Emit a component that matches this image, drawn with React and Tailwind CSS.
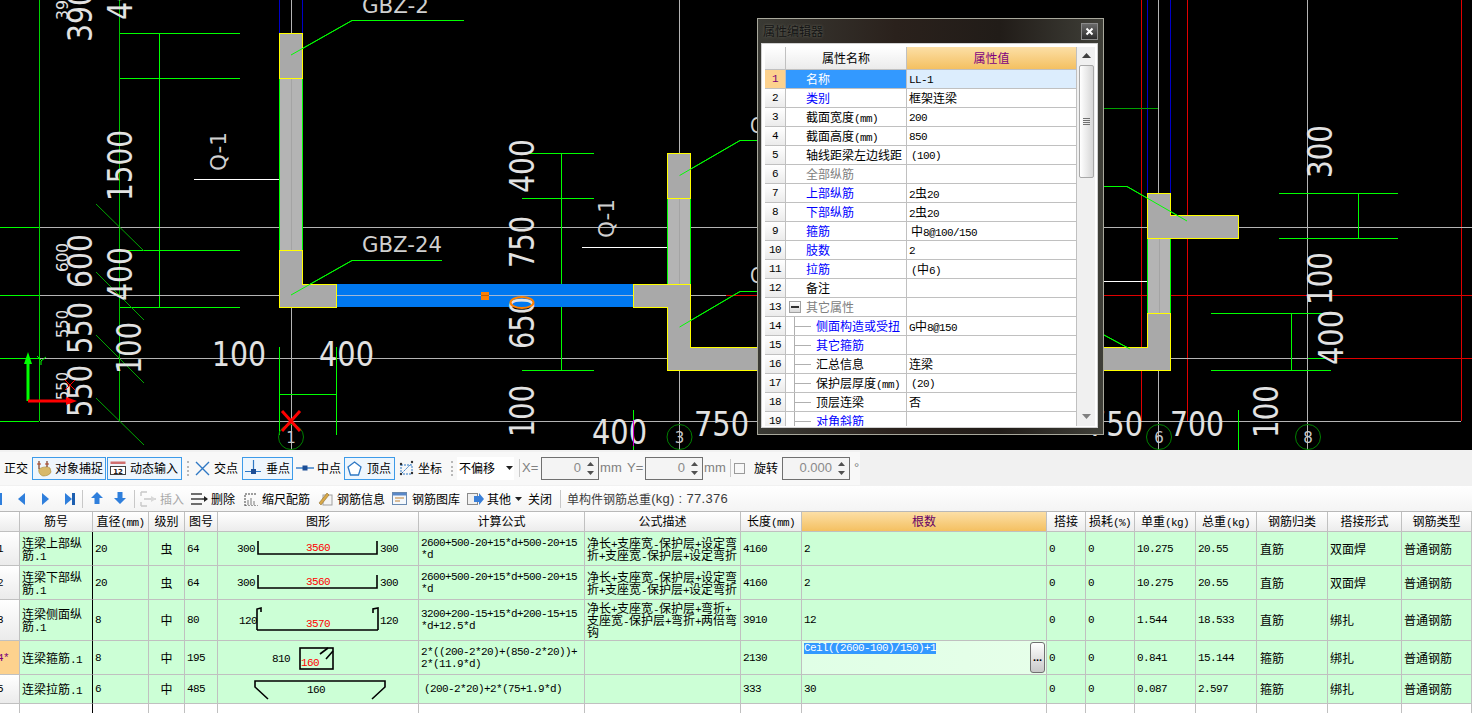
import React from "react";

const CJK = "font-['Noto_Sans_CJK_SC',sans-serif]";

function Mix({ t, cjk = "text-[12px]" }) {
  const parts = t.split(/([\u2E80-\u9FFF\uFF00-\uFFEF]+)/).filter(Boolean);
  return (
    <>
      {parts.map((p, i) =>
        /[\u2E80-\u9FFF\uFF00-\uFFEF]/.test(p) ? (
          <span key={i} className={`font-['Noto_Sans_CJK_SC',sans-serif] ${cjk}`}>{p}</span>
        ) : (
          <span key={i} className="font-['Liberation_Mono',monospace] text-[11px] tracking-[-0.6px]">{p}</span>
        )
      )}
    </>
  );
}

function Lines({ lines, cjk }) {
  return (
    <div className="flex flex-col">
      {lines.map((l, i) => (
        <div key={i} className="h-[12px] leading-[12px] whitespace-pre">
          <Mix t={l} cjk={cjk} />
        </div>
      ))}
    </div>
  );
}

const G = "#00ff00", GD = "#00a800", GR = "#b4b4b4", R = "#e00000", B = "#0000c8", Y = "#ffff00", W = "#ffffff";

const L = ({ a, c, w = 1 }) => (
  <line x1={a[0]} y1={a[1]} x2={a[2]} y2={a[3]} stroke={c} strokeWidth={w} />
);
const V = ({ x, y, t, len, s = 34, c = "#e2e2e2" }) => (
  <text transform={`translate(${x} ${y}) rotate(-90)`} textLength={len} lengthAdjust="spacingAndGlyphs" fontFamily="DejaVu Sans" fontSize={s} fill={c}>{t}</text>
);
const H = ({ x, y, t, len, s = 34, c = "#e2e2e2" }) => (
  <text x={x} y={y} textLength={len} lengthAdjust="spacingAndGlyphs" fontFamily="DejaVu Sans" fontSize={s} fill={c}>{t}</text>
);

const crisp = [
  [1141.5, 0, 1141.5, 421, R], [1187.5, 0, 1187.5, 421, R], [1461.5, 0, 1461.5, 421, R],
  [1147.5, 0, 1147.5, 193, B], [1170.5, 0, 1170.5, 193, B],
  [279.5, 0, 279.5, 33, B], [302.5, 0, 302.5, 33, B],
  [39.5, 0, 39.5, 421, "#00d000"], [119.5, 0, 119.5, 421, "#00c000"], [159.5, 33, 159.5, 307, G],
  [0, 227.5, 39, 227.5, G], [40, 227.5, 1472, 227.5, GR],
  [0, 295.5, 39, 295.5, G], [40, 295.5, 726, 295.5, GR], [726, 295.5, 1472, 295.5, R],
  [0, 358.5, 39, 358.5, G], [40, 358.5, 1308, 358.5, GR], [1308, 358.5, 1325, 358.5, G], [1325, 358.5, 1472, 358.5, R],
  [0, 421.5, 39, 421.5, G], [40, 421.5, 1461, 421.5, GR],
  [291.5, 0, 291.5, 450, GR], [679.5, 0, 679.5, 450, GR], [1158.5, 0, 1158.5, 450, GR], [1307.5, 0, 1307.5, 450, GR],
  [120, 33.5, 240, 33.5, G], [120, 78.5, 240, 78.5, G], [120, 250.5, 240, 250.5, G], [120, 307.5, 240, 307.5, G],
  [522, 153.5, 594, 153.5, G], [522, 198.5, 594, 198.5, G], [522, 284.5, 594, 284.5, G], [522, 370.5, 594, 370.5, G], [561.5, 153, 561.5, 370, G],
  [1279, 193.5, 1398, 193.5, G], [1279, 238.5, 1398, 238.5, G], [1358.5, 193, 1358.5, 238, G],
  [1211, 313.5, 1331, 313.5, G], [1211, 370.5, 1331, 370.5, G], [1291.5, 313, 1291.5, 370, G],
  [279.5, 347, 279.5, 435, G], [336.5, 347, 336.5, 435, G], [279, 394.5, 337, 394.5, G],
  [633.5, 410, 633.5, 450, G], [1238.5, 410, 1238.5, 450, G],
  [194, 179.5, 291, 179.5, W], [582, 247.5, 679, 247.5, W], [1104, 281.5, 1158, 281.5, W],
  [1104, 108.5, 1158, 108.5, "#00a000"],
  [352, 20.5, 464, 20.5, G], [352, 260.5, 442, 260.5, G], [740, 140.5, 757, 140.5, G], [740, 291.5, 757, 291.5, G], [1104, 186.5, 1127, 186.5, G],
];

const diag = [
  [96, 204, 144, 251, GD], [96, 272, 144, 320, GD], [96, 335, 144, 383, GD], [96, 398, 144, 445, GD],
  [291, 55, 352, 20.5, G], [291, 295, 352, 260.5, G], [679.6, 175.5, 740, 140.5, G], [679.6, 327, 740, 291.5, G],
  [1127, 186.5, 1187, 221, G], [1104, 335, 1130, 349, G],
];

function Wall({ x, y1, y2 }) {
  return (
    <g shapeRendering="crispEdges">
      <rect x={x} y={y1} width={23} height={y2 - y1} fill="#b4b4b4" />
      <L a={[x, y1, x, y2]} c={G} />
      <L a={[x + 23, y1, x + 23, y2]} c={G} />
      <L a={[x + 12, y1, x + 12, y2]} c="#a4a4a4" />
    </g>
  );
}
const Col = ({ p }) => (
  <polygon points={p} fill="#a9a9a9" stroke={Y} strokeWidth="1" shapeRendering="crispEdges" />
);

function Canvas() {
  return (
    <svg width="1472" height="450" className="block">
      <g shapeRendering="crispEdges">
        {crisp.map((l, i) => <L key={i} a={l.slice(0, 4)} c={l[4]} />)}
      </g>
      {diag.map((l, i) => <L key={i} a={l.slice(0, 4)} c={l[4]} />)}

      <Wall x={279.5} y1={78} y2={250} />
      <Wall x={667.5} y1={198} y2={284} />
      <Wall x={1147.5} y1={238} y2={313} />
      <Col p="279.5,33.5 302.5,33.5 302.5,78.5 279.5,78.5" />
      <Col p="279.5,250.5 302.5,250.5 302.5,284.5 336.5,284.5 336.5,307.5 279.5,307.5" />
      <Col p="667.5,153.5 690.5,153.5 690.5,198.5 667.5,198.5" />
      <rect x="337" y="284" width="297" height="23" fill="#0078f0" />
      <L a={[337, 295.5, 633, 295.5]} c="#9fb8d8" />
      <Col p="633.5,284.5 690.5,284.5 690.5,347.5 760,347.5 760,370.5 667.5,370.5 667.5,307.5 633.5,307.5" />
      <Col p="1147.5,193.5 1170.5,193.5 1170.5,215.5 1238.5,215.5 1238.5,238.5 1147.5,238.5" />
      <Col p="1170.5,313.5 1170.5,370.5 1100,370.5 1100,347.5 1147.5,347.5 1147.5,313.5" />
      <rect x="481" y="292" width="8" height="8" fill="#ff8000" />
      <L a={[481, 295.5, 489, 295.5]} c="#c06000" />

      {diag.slice(4).map((l, i) => <L key={i} a={l.slice(0, 4)} c={l[4]} />)}

      <H x={362} y={13} t="GBZ-2" len={67} s={22} c="#d0d0d0" />
      <H x={362} y={252} t="GBZ-24" len={80} s={22} c="#d0d0d0" />
      <H x={750} y={133} t="GBZ" len={40} s={22} c="#d0d0d0" />
      <H x={750} y={283} t="GBZ" len={40} s={22} c="#d0d0d0" />
      <V x={226} y={171} t="Q-1" len={39} s={22} c="#d0d0d0" />
      <V x={614} y={238} t="Q-1" len={39} s={22} c="#d0d0d0" />

      <V x={92} y={42} t="390" len={54} />
      <V x={68} y={20} t="39" len={20} s={16} />
      <V x={132} y={20} t="400" len={54} />
      <V x={132} y={201} t="1500" len={71} />
      <V x={92} y={288} t="600" len={54} />
      <V x={68} y={272} t="600" len={29} s={16} />
      <V x={132} y={301} t="400" len={54} />
      <V x={92} y={354} t="550" len={52} />
      <V x={68} y={338} t="550" len={28} s={16} />
      <V x={141} y={374} t="100" len={52} />
      <V x={92} y={417} t="550" len={52} />
      <V x={68} y={400} t="550" len={28} s={16} />
      <H x={212} y={366} t="100" len={54} />
      <H x={319} y={366} t="400" len={55} />
      <V x={534} y={193} t="400" len={54} />
      <V x={534} y={268} t="750" len={52} />
      <V x={534} y={349} t="650" len={52} />
      <V x={534} y={437} t="100" len={52} />
      <ellipse cx="522" cy="302.5" rx="11.5" ry="5.5" fill="none" stroke="#ff8000" strokeWidth="2" />
      <H x={592} y={444} t="400" len={55} />
      <L a={[633.5, 420, 633.5, 446]} c="#d000d0" />
      <H x={694} y={436} t="750" len={55} />
      <V x={1332} y={178} t="300" len={53} />
      <V x={1332} y={305} t="100" len={53} />
      <V x={1343} y={365} t="400" len={55} />
      <V x={1278} y={438} t="100" len={53} />
      <H x={1088} y={436} t="750" len={55} />
      <H x={1170} y={436} t="700" len={54} />

      {[[291, "1"], [679.5, "3"], [1159, "6"], [1308, "8"]].map(([x, t]) => (
        <g key={t}>
          <circle cx={x} cy="437" r="12.5" fill="none" stroke="#008000" />
          <text x={x} y="443" textAnchor="middle" fontFamily="DejaVu Sans" fontSize="15" fill="#c8c8c8">{t}</text>
        </g>
      ))}

      <L a={[28, 401, 28, 358]} c={G} w={3} />
      <polygon points="28,352 24,364 32,364" fill={G} />
      <L a={[28, 401, 72, 401]} c="#ff0000" w={3} />
      <polygon points="77,401 66,397 66,405" fill="#ff0000" />
      <L a={[37, 356, 42, 361]} c={G} />
      <L a={[46, 357, 41, 361]} c={G} />
      <L a={[41, 361, 41, 365]} c={G} />
      <L a={[65, 380, 75, 390]} c="#ff0000" />
      <L a={[75, 380, 65, 390]} c="#ff0000" />
      <L a={[282, 411, 300, 431]} c="#ff0000" w={3} />
      <L a={[300, 411, 282, 431]} c="#ff0000" w={3} />
    </svg>
  );
}

const propRows = [
  ["名称", "LL-1", "sel"],
  ["类别", "框架连梁", "b"],
  ["截面宽度(mm)", "200", "k"],
  ["截面高度(mm)", "850", "k"],
  ["轴线距梁左边线距", " (100)", "k"],
  ["全部纵筋", "", "g"],
  ["上部纵筋", "2虫20", "b"],
  ["下部纵筋", "2虫20", "b"],
  ["箍筋", " 中8@100/150", "b"],
  ["肢数", "2", "b"],
  ["拉筋", " (中6)", "b"],
  ["备注", "", "k"],
  ["其它属性", "", "g", "m"],
  ["侧面构造或受扭", "G中8@150", "b", "t"],
  ["其它箍筋", "", "b", "t"],
  ["汇总信息", "连梁", "k", "t"],
  ["保护层厚度(mm)", " (20)", "k", "t"],
  ["顶层连梁", "否", "k", "t"],
  ["对角斜筋", "", "b", "t"],
];

function Dialog() {
  return (
    <div className="absolute left-[757px] top-[18px] w-[347px] h-[417px] border border-[#a8a89c] bg-[linear-gradient(90deg,#3a3a34,#2a211c_40%,#211c18_70%,#3f3f38)]">
      <div className="flex items-center justify-between h-[24px]">
        <span className={`${CJK} ml-[5px] text-[12px] text-[#141414] [text-shadow:0_0_3px_#6b6b60]`}>属性编辑器</span>
        <div className="mr-[5px] w-[17px] h-[17px] border border-[#8a8a8a] bg-[linear-gradient(180deg,#6a6a6a,#2c2c2c)] flex items-center justify-center">
          <svg width="9" height="9"><path d="M1.5 1.5 7.5 7.5M7.5 1.5 1.5 7.5" stroke="#fff" strokeWidth="2" /></svg>
        </div>
      </div>
      <div className="ml-[3px] w-[337px] h-[385px] border border-[#d0d0d0] bg-white pl-[3px] pt-[3px] flex">
        <div className="w-[312px] h-[379px] overflow-hidden flex flex-col">
          <div className="grid grid-cols-[21px_121px_170px] h-[23px] shrink-0">
            <div className="border-r border-b border-[#c0c0c0] bg-[linear-gradient(180deg,#ffffff,#ebebeb)]" />
            <div className={`${CJK} border-r border-b border-[#c0c0c0] bg-[linear-gradient(180deg,#ffffff,#ebebeb)] text-[12px] text-black flex items-center justify-center`}>属性名称</div>
            <div className={`${CJK} border-r border-b border-[#c0c0c0] bg-[linear-gradient(180deg,#fcdfa6,#f4c061)] text-[12px] text-[#800080] flex items-center justify-center`}>属性值</div>
          </div>
          {propRows.map(([name, val, kind, tree], i) => {
            const sel = kind === "sel";
            const color = sel ? "text-white" : kind === "b" ? "text-[#0000ff]" : kind === "g" ? "text-[#808080]" : "text-black";
            const indent = val.startsWith(" ");
            return (
              <div key={i} className="grid grid-cols-[21px_121px_170px] h-[19px] shrink-0">
                <div className={`${sel ? "bg-[#fdd28e] text-[#7a007a]" : "bg-[linear-gradient(180deg,#ffffff,#ebebeb)] text-black"} border-r border-b border-[#c0c0c0] flex items-center justify-center leading-[12px]`}>
                  <div><Mix t={String(i + 1)} /></div>
                </div>
                <div className={`${sel ? "bg-[#3399ff]" : "bg-white"} ${color} relative border-r border-b border-[#c0c0c0] flex items-center pt-[2px] leading-[12px] whitespace-pre ${tree === "t" ? "pl-[30px]" : "pl-[20px]"}`}>
                  {tree === "t" && (
                    <>
                      <span className="absolute left-[8px] top-0 bottom-0 w-px bg-[#b0b0b0]" />
                      <span className="absolute left-[9px] top-[9px] w-[16px] h-px bg-[#b0b0b0]" />
                    </>
                  )}
                  {tree === "m" && (
                    <span className="absolute left-[3px] top-[3px] w-[12px] h-[12px] border border-[#a0a0a0] bg-[linear-gradient(180deg,#ffffff,#d8d8d8)] flex items-center justify-center">
                      <span className="w-[8px] h-[2px] bg-[#303030]" />
                    </span>
                  )}
                  <div><Mix t={name} /></div>
                </div>
                <div className={`${sel ? "bg-[#dcedfd]" : "bg-white"} ${indent ? "pl-[4px]" : "pl-[2px]"} text-black border-r border-b border-[#c0c0c0] flex items-center pt-[1px] leading-[12px] whitespace-pre`}>
                  <div><Mix t={val.trim()} /></div>
                </div>
              </div>
            );
          })}
        </div>
        <div className="w-[18px] h-[379px] bg-[#f0f0f0] flex flex-col items-center">
          <svg width="9" height="6" className="mt-[6px]"><path d="M4.5 0 9 5H0Z" fill="#404040" /></svg>
          <div className="mt-[6px] w-[15px] h-[113px] rounded-[2px] border border-[#a8a8a8] bg-[linear-gradient(90deg,#ffffff,#d6d6d6)] flex flex-col items-center justify-center gap-[1px]">
            <span className="w-[7px] h-px bg-[#707070]" />
            <span className="w-[7px] h-px bg-[#707070]" />
            <span className="w-[7px] h-px bg-[#707070]" />
            <span className="w-[7px] h-px bg-[#707070]" />
          </div>
          <svg width="9" height="6" className="mt-auto mb-[6px]"><path d="M4.5 5 9 0H0Z" fill="#808080" /></svg>
        </div>
      </div>
    </div>
  );
}

const T = ({ t, c = "text-black", m = "" }) => (
  <span className={`${CJK} text-[12px] leading-[16px] whitespace-nowrap ${c} ${m}`}>{t}</span>
);
const Lat = ({ t, w }) => (
  <span className={`font-['Liberation_Sans',sans-serif] text-[13px] text-[#808080] whitespace-nowrap ${w}`}>{t}</span>
);
const Dots = ({ m }) => (
  <span className={`w-[2px] h-[15px] border-l-2 border-dotted border-[#b8b8b8] ${m}`} />
);
const Sep = ({ m }) => <span className={`w-px h-[18px] bg-[#c8c8c8] ${m}`} />;
const Spin = ({ v, w, m }) => (
  <span className={`${w} ${m} h-[23px] border border-[#707070] bg-[#f4f4f4] flex items-center justify-end font-['Liberation_Sans',sans-serif] text-[13px] text-[#8a8a8a]`}>
    {v}
    <span className="ml-[5px] mr-[3px] w-[9px] flex flex-col gap-[5px] items-center">
      <svg width="7" height="4"><path d="M3.5 0 7 4H0Z" fill="#505050" /></svg>
      <svg width="7" height="4"><path d="M3.5 4 7 0H0Z" fill="#505050" /></svg>
    </span>
  </span>
);

function Toolbar1() {
  const active = "h-[23px] border border-[#3d9be9] bg-[#eef6fd] flex items-center";
  return (
    <div className="h-[36px] bg-[#f1f1f1] flex items-center">
      <div className="h-[33px] w-[860px] bg-[#f8f8f8] flex items-center shrink-0">
        <T t="正交" m="ml-[4px]" />
        <div className={`${active} ml-[4px] w-[74px] pl-[3px]`}>
          <svg width="16" height="17" viewBox="0 0 16 17">
            <path d="M3 9c3-2 8-3 11-1l1 4c-1 3-5 4-8 4-3-1-5-4-4-7Z" fill="#d8b96a" stroke="#a88838" strokeWidth=".6" />
            <path d="M3 1v8M11 1v6" stroke="#7a3a20" strokeWidth="1.2" />
            <path d="M1 4h4M9 4h4" stroke="#b04020" />
          </svg>
          <T t="对象捕捉" m="ml-[3px]" />
        </div>
        <div className={`${active} ml-[1px] w-[75px] pl-[2px]`}>
          <svg width="16" height="16" viewBox="0 0 16 16">
            <rect x=".5" y="1.5" width="15" height="2.5" fill="#d07070" />
            <rect x=".5" y="6.5" width="15" height="8" fill="#fff" stroke="#404040" />
            <text x="8" y="13.5" textAnchor="middle" fontFamily="DejaVu Sans" fontSize="7" fontWeight="700" fill="#202020">12</text>
          </svg>
          <T t="动态输入" m="ml-[4px]" />
        </div>
        <Dots m="ml-[5px]" />
        <svg width="15" height="15" className="ml-[6px]"><path d="M1 1 14 14M14 1 1 14" stroke="#2f78c4" strokeWidth="1.4" /></svg>
        <T t="交点" m="ml-[4px]" />
        <div className={`${active} ml-[4px] w-[51px] pl-[2px]`}>
          <svg width="16" height="16"><path d="M0 11.5H16M8.5 0V11" stroke="#2f78c4" strokeWidth="1.2" /><rect x="6" y="9" width="5" height="5" fill="#1c4e96" /></svg>
          <T t="垂点" m="ml-[5px]" />
        </div>
        <svg width="18" height="8" className="ml-[3px]"><path d="M0 4H18" stroke="#2f78c4" strokeWidth="1.4" /><rect x="6.5" y="1.5" width="5" height="5" fill="#1c4e96" /></svg>
        <T t="中点" m="ml-[3px]" />
        <div className={`${active} ml-[3px] w-[51px] pl-[2px]`}>
          <svg width="15" height="15"><path d="M7.5 1 14 6 11.5 14H3.5L1 6Z" fill="#fff" stroke="#2f78c4" strokeWidth="1.3" /></svg>
          <T t="顶点" m="ml-[5px]" />
        </div>
        <svg width="15" height="16" className="ml-[4px]">
          <path d="M2 5H13V14H2Z" fill="none" stroke="#2f78c4" strokeDasharray="2 1" />
          <path d="M3 13 12 4" stroke="#2f78c4" strokeDasharray="2 1" />
          <circle cx="2" cy="4" r="1.2" fill="#303030" /><circle cx="13" cy="2" r="1.2" fill="#303030" /><circle cx="2" cy="14" r="1.2" fill="#303030" /><circle cx="13" cy="13" r="1.2" fill="#303030" />
        </svg>
        <T t="坐标" m="ml-[4px]" />
        <Dots m="ml-[9px]" />
        <div className="ml-[4px] w-[57px] h-[23px] bg-white flex items-center pl-[2px]">
          <T t="不偏移" />
          <svg width="7" height="4" className="ml-[11px]"><path d="M0 0H7L3.5 4Z" fill="#202020" /></svg>
        </div>
        <Sep m="ml-[5px]" />
        <Lat t="X=" w="ml-[2px] w-[17px]" />
        <Spin v="0" w="w-[58px]" m="ml-[2px]" />
        <Lat t="mm" w="ml-[1px] w-[22px]" />
        <Lat t="Y=" w="ml-[5px] w-[16px]" />
        <Spin v="0" w="w-[58px]" m="ml-[2px]" />
        <Lat t="mm" w="ml-[1px] w-[22px]" />
        <Sep m="ml-[4px]" />
        <span className="ml-[3px] w-[11px] h-[11px] border border-[#9a9a9a] bg-[#f8f8f8]" />
        <T t="旋转" m="ml-[9px]" />
        <Spin v="0.000" w="w-[68px]" m="ml-[4px]" />
        <Lat t="°" w="ml-[4px]" />
      </div>
    </div>
  );
}

const Tri = ({ m, d = "r", bar }) => (
  <svg width={bar ? 11 : 9} height="14" className={m}>
    {d === "r" ? <path d="M1 1 8 7 1 13Z" fill="#2f7fdc" /> : <path d="M8 1 1 7 8 13Z" fill="#2f7fdc" />}
    {bar && <rect x="8" y="1" width="3" height="12" fill="#1d5fb0" />}
  </svg>
);

function Toolbar2() {
  return (
    <div className="h-[26px] bg-[linear-gradient(180deg,#ffffff,#f4f4f4)] flex items-center border-b border-[#b8b8b8]">
      <span className="w-[2px] h-[12px] bg-[#2f7fdc]" />
      <Tri d="l" m="ml-[15px]" />
      <Tri m="ml-[15px]" />
      <Tri bar m="ml-[14px]" />
      <Sep m="ml-[7px]" />
      <svg width="12" height="13" className="ml-[8px]"><path d="M6 0 12 6H8.5V12H3.5V6H0Z" fill="#2f7fdc" /></svg>
      <svg width="12" height="13" className="ml-[11px]"><path d="M6 12 12 6H8.5V0H3.5V6H0Z" fill="#2f7fdc" /></svg>
      <Sep m="ml-[8px]" />
      <svg width="17" height="16" className="ml-[5px]"><path d="M1 1H7M1 1V5M1 15H7M1 15V11M4 8H16" stroke="#c8c8c8" strokeWidth="1.4" fill="none" /><path d="M11 5 16 8 11 11Z" fill="#d8d8d8" /></svg>
      <T t="插入" c="text-[#a8a8a8]" m="ml-[3px]" />
      <svg width="17" height="14" className="ml-[7px]"><path d="M0 2H11M0 7H11M0 12H11" stroke="#404040" strokeWidth="1.4" /><path d="M11 7H16" stroke="#202020" strokeWidth="1.4" /><path d="M13 4 17 7 13 10Z" fill="#202020" /></svg>
      <T t="删除" m="ml-[3px]" />
      <svg width="14" height="14" className="ml-[9px]"><path d="M1 3V14M1 14H14M1 2H13" stroke="#404040" strokeWidth="1" strokeDasharray="2 1" fill="none" /><path d="M4 8V13M7 6V13M10 9V13" stroke="#7a7a7a" /></svg>
      <T t="缩尺配筋" m="ml-[4px]" />
      <svg width="15" height="15" className="ml-[8px]"><rect x="5" y="4" width="9" height="10" fill="#f4f4f4" stroke="#a0a0a0" /><path d="M1 12 9 2 11 4 3 14Z" fill="#d8a848" stroke="#806020" strokeWidth=".5" /></svg>
      <T t="钢筋信息" m="ml-[4px]" />
      <svg width="15" height="13" className="ml-[7px]"><rect x=".5" y=".5" width="14" height="12" fill="#f4f8fc" stroke="#6a8ab0" /><rect x="1" y="1" width="13" height="2.5" fill="#5a88c8" /><path d="M3 6H12M3 9H8" stroke="#c08030" /></svg>
      <T t="钢筋图库" m="ml-[5px]" />
      <svg width="17" height="14" className="ml-[7px]"><rect x=".5" y="1.5" width="10" height="11" fill="#f0f0f0" stroke="#8a8a8a" /><path d="M7 4H12V1L17 7 12 13V10H7Z" fill="#3a7fd8" /></svg>
      <T t="其他" m="ml-[3px]" />
      <svg width="7" height="4" className="ml-[4px]"><path d="M0 0H7L3.5 4Z" fill="#202020" /></svg>
      <T t="关闭" m="ml-[6px]" />
      <Sep m="ml-[8px]" />
      <span className="ml-[6px] text-[#3c3c3c] whitespace-nowrap flex items-center">
        <span className={`${CJK} text-[12px]`}>单构件钢筋总重</span>
        <span className="font-['Liberation_Sans',sans-serif] text-[13px] tracking-[0.3px]">(kg) : 77.376</span>
      </span>
    </div>
  );
}

const svgMono = { fontFamily: "Liberation Mono", fontSize: 11, letterSpacing: "-0.6px" };
const Tx = ({ x, y, t, red, mid }) => (
  <text x={x} y={y} style={svgMono} fill={red ? "#ff0000" : "#000"} textAnchor={mid ? "middle" : "start"}>{t}</text>
);
const Shape = ({ n }) => {
  const h = [33, 33, 40, 33, 28][n];
  return (
    <svg width="200" height={h} className="block">
      {n < 2 && (
        <>
          <Tx x={19} y={20} t="300" />
          <path d="M40 9V22H159V9" fill="none" stroke="#000" strokeWidth="1.6" />
          <Tx x={100} y={19} t="3560" red mid />
          <Tx x={162} y={20} t="300" />
        </>
      )}
      {n === 2 && (
        <>
          <Tx x={21} y={24} t="120" />
          <path d="M39 30V9L43 8V12M160 30V8L155 9V13M39 30H160" fill="none" stroke="#000" strokeWidth="1.6" />
          <Tx x={100} y={27} t="3570" red mid />
          <Tx x={162} y={24} t="120" />
        </>
      )}
      {n === 3 && (
        <>
          <Tx x={54} y={21} t="810" />
          <rect x="82" y="7" width="33" height="21" fill="none" stroke="#000" strokeWidth="1.6" />
          <path d="M102 13 110 7M108 18 115 10" stroke="#000" strokeWidth="1.6" />
          <Tx x={83} y={25} t="160" red />
        </>
      )}
      {n === 4 && (
        <>
          <path d="M50 24 37 12V6H167V12L154 24" fill="none" stroke="#000" strokeWidth="1.6" />
          <Tx x={98} y={18} t="160" mid />
        </>
      )}
    </svg>
  );
};

const cols = "grid-cols-[20px_73px_56px_36px_33px_201px_166px_156px_61px_245px_39px_49px_61px_61px_71px_74px_70px]";
const heads = ["", "筋号", "直径(mm)", "级别", "图号", "图形", "计算公式", "公式描述", "长度(mm)", "根数", "搭接", "损耗(%)", "单重(kg)", "总重(kg)", "钢筋归类", "搭接形式", "钢筋类型"];

const rows = [
  { h: "h-[34px]", n: "1", name: ["连梁上部纵", "筋.1"], d: "20", g: "虫", no: "64", f: ["2600+500-20+15*d+500-20+15", "*d"], desc: ["净长+支座宽-保护层+设定弯", "折+支座宽-保护层+设定弯折"], len: "4160", cnt: "2", uw: "10.275", tw: "20.55", cat: "直筋", lap: "双面焊" },
  { h: "h-[34px]", n: "2", name: ["连梁下部纵", "筋.1"], d: "20", g: "虫", no: "64", f: ["2600+500-20+15*d+500-20+15", "*d"], desc: ["净长+支座宽-保护层+设定弯", "折+支座宽-保护层+设定弯折"], len: "4160", cnt: "2", uw: "10.275", tw: "20.55", cat: "直筋", lap: "双面焊" },
  { h: "h-[41px]", n: "3", name: ["连梁侧面纵", "筋.1"], d: "8", g: "中", no: "80", f: ["3200+200-15+15*d+200-15+15", "*d+12.5*d"], desc: ["净长+支座宽-保护层+弯折+", "支座宽-保护层+弯折+两倍弯", "钩"], len: "3910", cnt: "12", uw: "1.544", tw: "18.533", cat: "直筋", lap: "绑扎" },
  { h: "h-[34px]", n: "4*", name: ["连梁箍筋.1"], d: "8", g: "中", no: "195", f: ["2*((200-2*20)+(850-2*20))+", "2*(11.9*d)"], desc: [], len: "2130", cnt: null, uw: "0.841", tw: "15.144", cat: "箍筋", lap: "绑扎", active: true },
  { h: "h-[29px]", n: "5", name: ["连梁拉筋.1"], d: "6", g: "中", no: "485", f: ["(200-2*20)+2*(75+1.9*d)"], desc: [], len: "333", cnt: "30", uw: "0.087", tw: "2.597", cat: "箍筋", lap: "绑扎", pad: true },
];

const cell = "border-r border-b border-[#c0c0c0] flex items-center overflow-hidden";
const green = "bg-[#ccffd6] text-black";

function Table() {
  return (
    <div className="text-black">
      <div className={`grid ${cols} h-[20px]`}>
        {heads.map((h, i) => (
          <div key={i} className={`${cell} justify-center leading-[12px] whitespace-pre ${i === 9 ? "bg-[linear-gradient(180deg,#fcdfa6,#f4c061)] text-[#660066]" : "bg-[linear-gradient(180deg,#ffffff,#ececec)]"}`}>
            <div><Mix t={h} /></div>
          </div>
        ))}
      </div>
      {rows.map((r, ri) => (
        <div key={ri} className={`grid ${cols} ${r.h}`}>
          <div className={`${cell} ${r.active ? "bg-[#fdd28e] text-[#7a007a]" : "bg-[linear-gradient(180deg,#ffffff,#ebebeb)]"} leading-[12px]`}>
            <div className="-ml-[3px] shrink-0 whitespace-pre"><Mix t={r.n} /></div>
          </div>
          <div className={`${green} border-r border-r-black border-b border-b-[#c0c0c0] flex items-center pl-[2px]`}><Lines lines={r.name} /></div>
          <div className={`${cell} ${green} pl-[2px]`}><Lines lines={[r.d]} /></div>
          <div className={`${cell} ${green} justify-center`}><Lines lines={[r.g]} /></div>
          <div className={`${cell} ${green} pl-[2px]`}><Lines lines={[r.no]} /></div>
          <div className={`${green} border-r border-b border-[#c0c0c0] overflow-hidden`}><Shape n={ri} /></div>
          <div className={`${cell} ${green} ${r.pad ? "pl-[5px]" : "pl-[2px]"}`}><Lines lines={r.f} /></div>
          <div className={`${cell} ${green} pl-[2px]`}><Lines lines={r.desc} /></div>
          <div className={`${cell} ${green} pl-[2px]`}><Lines lines={[r.len]} /></div>
          {r.active ? (
            <div className={`${cell} relative bg-[linear-gradient(90deg,#e0ffe6,#e6ffe9)] items-start pl-[2px] pt-[2px]`}>
              <div className="bg-[#3399ff] text-white h-[11px] leading-[11px] whitespace-pre"><Mix t="Ceil((2600-100)/150)+1" /></div>
              <span className="absolute left-[228px] top-[1px] w-[15px] h-[31px] rounded-[3px] border border-[#707070] bg-[linear-gradient(180deg,#ffffff,#c8c8c8)] flex items-center justify-center text-[11px] leading-[11px] font-bold font-['Liberation_Sans',sans-serif]">...</span>
            </div>
          ) : (
            <div className={`${cell} ${green} pl-[2px]`}><Lines lines={[r.cnt]} /></div>
          )}
          <div className={`${cell} ${green} pl-[2px]`}><Lines lines={["0"]} /></div>
          <div className={`${cell} ${green} pl-[2px]`}><Lines lines={["0"]} /></div>
          <div className={`${cell} ${green} pl-[2px]`}><Lines lines={[r.uw]} /></div>
          <div className={`${cell} ${green} pl-[2px]`}><Lines lines={[r.tw]} /></div>
          <div className={`${cell} ${green} pl-[3px]`}><Lines lines={[r.cat]} /></div>
          <div className={`${cell} ${green} pl-[2px]`}><Lines lines={[r.lap]} /></div>
          <div className={`${cell} ${green} pl-[2px]`}><Lines lines={["普通钢筋"]} /></div>
        </div>
      ))}
      <div className={`grid ${cols} h-[9px]`}>
        {heads.map((_, i) => (
          <div key={i} className={`bg-white border-r ${i === 1 ? "border-black" : "border-[#c0c0c0]"}`} />
        ))}
      </div>
    </div>
  );
}

export default function App() {
  return (
    <div className="relative w-[1472px] h-[713px] overflow-hidden bg-white text-[11px] font-['Liberation_Mono',monospace]">
      <div className="relative h-[450px] bg-black">
        <Canvas />
        <Dialog />
      </div>
      <Toolbar1 />
      <Toolbar2 />
      <Table />
    </div>
  );
}
